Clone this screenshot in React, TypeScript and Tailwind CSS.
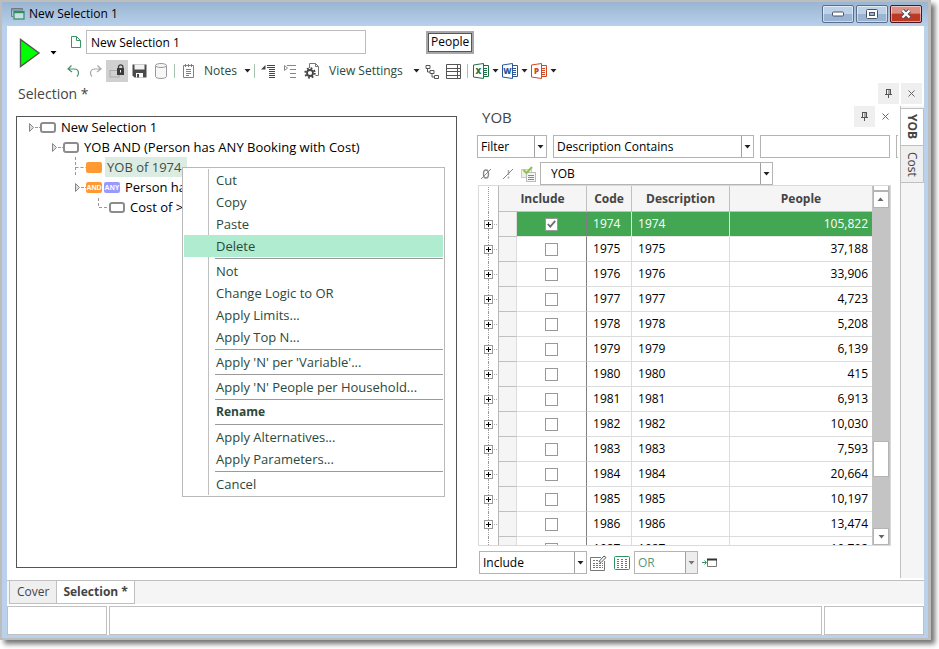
import type { ReactNode } from 'react';

const treeRows = [
  { indent: 'pl-3', link: 'arrow', badges: ['box'], text: 'New Selection 1' },
  { indent: 'pl-[35px]', link: 'arrow', badges: ['box'], text: 'YOB AND (Person has ANY Booking with Cost)' },
  { indent: 'pl-[58px]', link: 'tee', badges: ['orange'], text: 'YOB of 1974', selected: true },
  { indent: 'pl-[58px]', link: 'arrow', badges: ['AND', 'ANY'], text: 'Person has' },
  { indent: 'pl-[81px]', link: 'corner', badges: ['box'], text: 'Cost of >' },
];

const menuGroups = [
  ['Cut', 'Copy', 'Paste', 'Delete'],
  ['Not', 'Change Logic to OR', 'Apply Limits...', 'Apply Top N...'],
  ["Apply 'N' per 'Variable'..."],
  ["Apply 'N' People per Household..."],
  ['Rename'],
  ['Apply Alternatives...', 'Apply Parameters...'],
  ['Cancel'],
];

const rows = [
  { code: '1974', people: '105,822' },
  { code: '1975', people: '37,188' },
  { code: '1976', people: '33,906' },
  { code: '1977', people: '4,723' },
  { code: '1978', people: '5,208' },
  { code: '1979', people: '6,139' },
  { code: '1980', people: '415' },
  { code: '1981', people: '6,913' },
  { code: '1982', people: '10,030' },
  { code: '1983', people: '7,593' },
  { code: '1984', people: '20,664' },
  { code: '1985', people: '10,197' },
  { code: '1986', people: '13,474' },
  { code: '1987', people: '10,792' },
];

const offices = [
  { letter: 'X', name: 'Excel', color: '#1e7145' },
  { letter: 'W', name: 'Word', color: '#2b579a' },
  { letter: 'P', name: 'PowerPoint', color: '#d24726' },
];

function Caret({ color = '#222' }: { color?: string }) {
  return (
    <svg width="7" height="4" viewBox="0 0 7 4" className="shrink-0" aria-hidden="true">
      <path d="M0.5 0h6L3.5 3.5z" fill={color} />
    </svg>
  );
}

function ToolButton({ label, active, children }: { label: string; active?: boolean; children: ReactNode }) {
  return (
    <button
      aria-label={label}
      className={`flex h-[22px] w-[22px] shrink-0 items-center justify-center ${active ? 'bg-[#d0d0d0]' : ''}`}
    >
      {children}
    </button>
  );
}

function Separator() {
  return <span className="mx-[2px] h-[14px] w-px shrink-0 bg-[#a5c4b2]" />;
}

function Dropdown({ label, value, className, disabled }: { label: string; value: string; className: string; disabled?: boolean }) {
  return (
    <div className={`flex h-[23px] border border-[#b4b4b4] bg-white ${className}`}>
      <select
        aria-label={label}
        disabled={disabled}
        className={`min-w-0 flex-1 appearance-none truncate outline-none ${disabled ? 'text-[#5f9478]' : 'text-black'}`}
      >
        <option>{value}</option>
      </select>
      <span className={`flex w-3 shrink-0 items-center justify-center border-l border-[#a0a0a0] ${disabled ? 'bg-[#ededed]' : ''}`}>
        <Caret color={disabled ? '#777' : '#222'} />
      </span>
    </div>
  );
}

function PinButton() {
  return (
    <button aria-label="Pin" className="flex h-[21px] w-[21px] items-center justify-center bg-[#efefef]">
      <svg width="9" height="9" viewBox="0 0 9 9" fill="none" stroke="#555" shapeRendering="crispEdges">
        <path d="M2 0.5h5M2.5 0v5M6.5 0v5M1 5.5h7M4.5 6v3" />
        <path d="M4.5 1v4M5.5 1v4" stroke="#aaa" />
      </svg>
    </button>
  );
}

function CloseButton({ shaded }: { shaded?: boolean }) {
  return (
    <button aria-label="Close panel" className={`flex h-[21px] w-[21px] items-center justify-center ${shaded ? 'bg-[#efefef]' : ''}`}>
      <svg width="7" height="7" viewBox="0 0 7 7" fill="none" stroke="#666">
        <path d="M0.5 0.5l6 6M6.5 0.5l-6 6" />
      </svg>
    </button>
  );
}

function TitleBar() {
  const frame = 'flex h-[18px] w-8 items-center justify-center rounded-[2px] border shadow-[inset_0_0_0_1px_rgba(255,255,255,0.5)]';
  const blue = 'border-[#5a6f8c] bg-linear-to-b from-[#bdd2e8] from-50% to-[#9ab5d3] to-50%';
  return (
    <header className="flex h-6 shrink-0 items-center bg-linear-to-b from-[#9ab5d2] to-[#b8d0ea] pr-[6px] pl-[9px]">
      <svg width="14" height="12" viewBox="0 0 14 12" fill="none" aria-hidden="true">
        <path d="M2 8.5H0.5v-8h11V2" stroke="#6f7b80" />
        <path d="M0.5 2h11" stroke="#6f7b80" />
        <rect x="3" y="3.5" width="10" height="7.5" fill="#c8dde8" stroke="#2f8f5b" strokeWidth="1.2" />
        <path d="M3 4.2h10" stroke="#2f8f5b" strokeWidth="2" />
      </svg>
      <h1 className="ml-1 flex-1 text-black">New Selection 1</h1>
      <div className="flex gap-[2px]">
        <button aria-label="Minimize" className={`${frame} ${blue}`}>
          <svg width="12" height="6" viewBox="0 0 12 6">
            <rect x="0.5" y="1" width="11" height="4" rx="1" fill="#fff" stroke="#4a5468" />
          </svg>
        </button>
        <button aria-label="Maximize" className={`${frame} ${blue}`}>
          <svg width="12" height="10" viewBox="0 0 12 10">
            <rect x="0.5" y="0.5" width="11" height="9" rx="1" fill="#fff" stroke="#4a5468" />
            <rect x="3.5" y="3.5" width="5" height="3" fill="#9ab5d3" stroke="#4a5468" />
          </svg>
        </button>
        <button
          aria-label="Close"
          className={`${frame} border-[#4d1420] bg-linear-to-b from-[#dd8f84] from-45% to-[#bb3a26] to-50%`}
        >
          <svg width="12" height="10" viewBox="0 0 12 10">
            <path d="M2.5 1.5l7 7M9.5 1.5l-7 7" stroke="#4a4a5a" strokeWidth="4.2" />
            <path d="M2.5 1.5l7 7M9.5 1.5l-7 7" stroke="#fff" strokeWidth="2.4" />
          </svg>
        </button>
      </div>
    </header>
  );
}

function OfficeIcon({ letter, color }: { letter: string; color: string }) {
  return (
    <svg width="16" height="16" viewBox="0 0 16 16" fill="none" aria-hidden="true">
      <path d="M10.5 2.5h5v11h-5" stroke={color} />
      <path d="M11 5.5h3M11 7.5h3M11 9.5h3M11 11.5h3" stroke={color} />
      <path d="M0.5 2L10.5 0.5v15L0.5 14z" fill="#fff" stroke={color} />
      <text x="5.5" y="11" textAnchor="middle" fontSize="8" fontWeight="800" fill={color}>
        {letter}
      </text>
    </svg>
  );
}

function Toolbar() {
  return (
    <div className="flex shrink-0 pt-1">
      <div className="flex w-[55px] shrink-0 gap-[9px] pt-2 pl-3">
        <button aria-label="Run" className="flex h-[30px]">
          <svg width="22" height="30" viewBox="0 0 22 30">
            <path d="M1.5 1.5v27L20 15z" fill="#0f0" stroke="#4d5a4d" strokeWidth="1.4" />
          </svg>
        </button>
        <button aria-label="Run options" className="flex h-[30px] items-center">
          <Caret color="#000" />
        </button>
      </div>
      <div className="flex min-w-0 flex-1 flex-col gap-[6px]">
        <div className="flex h-6 items-center">
          <svg width="12" height="14" viewBox="0 0 12 14" fill="none" stroke="#3a9563" className="mr-1 ml-2" aria-hidden="true">
            <path d="M1.5 1.5h5l4 4v7h-9zM6.5 1.5v4h4" />
          </svg>
          <input
            aria-label="Selection name"
            defaultValue="New Selection 1"
            className="h-6 w-[280px] border border-[#bcbcbc] px-1 text-black outline-none"
          />
          <button className="ml-[60px] h-[23px] border-2 border-[#a8a8a8] text-black">
            <span className="flex h-[19px] items-center border border-[#555] px-[2px]">People</span>
          </button>
        </div>
        <div className="flex h-[22px] items-center">
          <ToolButton label="Undo">
            <svg width="13" height="12" viewBox="0 0 13 12" fill="none" stroke="#4b8f6c" strokeWidth="1.2">
              <path d="M4.5 0.5L1 4l4 3M1 4h6c3 0 4.500 2 4.500 4 0 1.500-.500 2.500-1.500 3.500" />
            </svg>
          </ToolButton>
          <ToolButton label="Redo">
            <svg width="13" height="12" viewBox="0 0 13 12" fill="none" stroke="#a3a8a6" strokeWidth="1.2">
              <path d="M8.500 0.500L12 4l-4 3M12 4H6C3 4 1.500 6 1.500 8c0 1.500.500 2.500 1.500 3.500" />
            </svg>
          </ToolButton>
          <ToolButton label="Lock" active>
            <svg width="16" height="14" viewBox="0 0 16 14" fill="none">
              <rect x="1" y="6.500" width="9" height="6.500" stroke="#aaa" />
              <path d="M9.500 4.500V3a2.200 2.200 0 0 1 4.400 0v1.500" stroke="#444" strokeWidth="1.3" />
              <rect x="8" y="4" width="7" height="7" fill="#3a3a3a" />
              <path d="M11.500 6v2.500" stroke="#eee" />
            </svg>
          </ToolButton>
          <ToolButton label="Save">
            <svg width="15" height="14" viewBox="0 0 15 14">
              <path d="M0.500 0.500h14v13h-12l-2-2z" fill="#4a4a4a" />
              <path d="M2.500 0.500h10v5h-10z" fill="#f2f2f2" />
              <path d="M4 9h7v4.500H4z" fill="#fff" />
              <path d="M5 10h2v3.500H5z" fill="#4a4a4a" />
            </svg>
          </ToolButton>
          <ToolButton label="Database">
            <svg width="12" height="16" viewBox="0 0 12 16" fill="#f7f7f7" stroke="#999">
              <path d="M0.500 2.500v11c0 2.600 11 2.600 11 0v-11" />
              <ellipse cx="6" cy="2.500" rx="5.500" ry="2" />
            </svg>
          </ToolButton>
          <Separator />
          <ToolButton label="Notes list">
            <svg width="11" height="14" viewBox="0 0 11 14" fill="none" stroke="#808080">
              <path d="M0.500 1.500h10v12h-10zM2.500 0v3M5.500 0v3M8.500 0v3M3 5.500h5M3 7.500h5M3 9.500h5M3 11.500h3" />
            </svg>
          </ToolButton>
          <button className="flex items-center gap-[7px] pr-px pl-[5px]">
            Notes
            <Caret />
          </button>
          <Separator />
          <ToolButton label="Expand">
            <svg width="16" height="14" viewBox="0 0 16 14" stroke="#444">
              <path d="M5.500 1v4.500H1z" fill="#444" stroke="none" />
              <path d="M7 1.500h8M7 3.500h8M9 5.500h6M9 7.500h6M9 9.500h6M9 11.500h6M9 13.500h6" />
            </svg>
          </ToolButton>
          <ToolButton label="Collapse">
            <svg width="14" height="14" viewBox="0 0 14 14" fill="none" stroke="#888">
              <path d="M1.500 1.500v5l3-2.500z" />
              <path d="M4 1.500h9M7 5.500h6M7 9.500h6M7 13.500h6" />
            </svg>
          </ToolButton>
          <ToolButton label="Settings">
            <svg width="16" height="16" viewBox="0 0 16 16" fill="none">
              <path d="M5.500 5V0.500h6l3 3v9h-3M11.500 0.500v3h3" stroke="#777" />
              <circle cx="6" cy="10" r="4.700" stroke="#444" strokeWidth="2" strokeDasharray="1.800 1.890" />
              <circle cx="6" cy="10" r="3" fill="#fff" stroke="#444" strokeWidth="1.800" />
            </svg>
          </ToolButton>
          <button className="flex items-center gap-[10px] pr-px pl-[6px] whitespace-nowrap">
            View Settings
            <Caret />
          </button>
          <ToolButton label="Tree view">
            <svg width="14" height="15" viewBox="0 0 14 15" fill="none" stroke="#555">
              <path d="M1 1.500h4v3H1zM5 6.500h4v3H5zM9.500 11.500h4v3h-4zM2.500 5v3H5M7 10v3h2.500" />
            </svg>
          </ToolButton>
          <ToolButton label="Grid view">
            <svg width="15" height="15" viewBox="0 0 15 15" fill="none" stroke="#555">
              <path d="M0.500 0.500h14v14H0.500zM0 4.500h15M0 7.500h15M0 11.500h15M11.500 0v15" />
            </svg>
          </ToolButton>
          <Separator />
          {offices.map((office) => (
            <button key={office.name} aria-label={`Export to ${office.name}`} className="flex shrink-0 items-center pl-[3px]">
              <span className="w-[19px]">
                <OfficeIcon letter={office.letter} color={office.color} />
              </span>
              <Caret />
            </button>
          ))}
        </div>
      </div>
    </div>
  );
}

function TreeLink({ kind }: { kind: string }) {
  return (
    <svg width="11" height="20" viewBox="0 0 11 20" fill="none" className="shrink-0" aria-hidden="true">
      {kind === 'arrow' && (
        <>
          <path d="M0.500 6.500v8l4-4z" fill="#ddd" stroke="#888" />
          <path d="M6 10.500h5" stroke="#999" strokeDasharray="3 1" />
        </>
      )}
      {kind === 'tee' && <path d="M0.500 0v20M0.500 10.500H11" stroke="#999" strokeDasharray="3 2" />}
      {kind === 'corner' && <path d="M0.500 1v9.500H11" stroke="#999" strokeDasharray="3 2" />}
    </svg>
  );
}

function Badge({ kind }: { kind: string }) {
  if (kind === 'box') {
    return <span className="h-[11px] w-4 shrink-0 rounded-[3px] border-2 border-[#8c8c8c] bg-white" />;
  }
  if (kind === 'orange') {
    return <span className="h-[11px] w-4 shrink-0 rounded-[2px] bg-[#ff9933]" />;
  }
  return (
    <span
      className={`flex h-[11px] w-4 shrink-0 items-center justify-center rounded-[2px] font-['Liberation_Sans',sans-serif] text-[7px] leading-none font-bold text-white ${kind === 'AND' ? 'bg-[#ff9933]' : 'bg-[#9999ff]'}`}
    >
      {kind}
    </span>
  );
}

function ContextMenu() {
  return (
    <div role="menu" className="absolute top-[50px] left-[165px] w-[263px] border border-[#b9b9b9] bg-white p-px text-[13px] text-[#2b4a3c]">
      {menuGroups.map((group, i) => (
        <div key={group[0]}>
          {i > 0 && (
            <div className="flex h-[3px] items-center">
              <span className="mr-[6px] h-full w-[25px] border-r border-[#c0c0c0]" />
              <span className="h-px flex-1 bg-[#9a9a9a]" />
            </div>
          )}
          {group.map((item) => (
            <button
              key={item}
              role="menuitem"
              className={`flex h-[22px] w-full items-center ${item === 'Delete' ? 'bg-[#b0edd0]' : ''} ${item === 'Rename' ? 'text-[12px] font-bold' : ''}`}
            >
              <span className={`mr-[7px] h-full w-[25px] border-r ${item === 'Delete' ? 'border-transparent' : 'border-[#c0c0c0]'}`} />
              {item}
            </button>
          ))}
        </div>
      ))}
    </div>
  );
}

function SelectionTree() {
  return (
    <section className="relative mt-[10px] mr-[13px] mb-[10px] ml-[9px] border border-[#555] bg-white text-[13px] text-black">
      <ul>
        {treeRows.map((row) => (
          <li key={row.text} className={`flex h-5 items-center whitespace-nowrap ${row.indent}`}>
            <TreeLink kind={row.link} />
            <span className="mr-[3px] flex gap-[2px]">
              {row.badges.map((kind) => (
                <Badge key={kind} kind={kind} />
              ))}
            </span>
            <span className={`flex h-5 items-center px-[2px] ${row.selected ? 'bg-[#dcece3] pr-[6px] text-[#3f4f47]' : ''}`}>
              {row.text}
            </span>
          </li>
        ))}
      </ul>
      <ContextMenu />
    </section>
  );
}

function Expander({ label }: { label: string }) {
  return (
    <button aria-label={`Expand ${label}`} className="flex">
      <svg width="14" height="9" viewBox="0 0 14 9" fill="none">
        <rect x="0.500" y="0.500" width="8" height="8" fill="#fff" stroke="#999" />
        <path d="M2 4.500h5M4.500 2v5" stroke="#000" />
        <path d="M10 4.500h4" stroke="#aaa" strokeDasharray="1 1" />
      </svg>
    </button>
  );
}

function VariableGrid() {
  const cell = 'h-[25px] border-b p-0';
  return (
    <div className="mr-[7px] ml-[8px] flex min-h-0 flex-1 overflow-hidden border border-[#dadada]">
      <div className="min-w-0 flex-1 overflow-hidden">
        <table className="w-full table-fixed border-separate border-spacing-0">
          <colgroup>
            <col className="w-[20px]" />
            <col className="w-[18px]" />
            <col className="w-[70px]" />
            <col className="w-[45px]" />
            <col className="w-[98px]" />
            <col />
          </colgroup>
          <thead>
            <tr className="bg-[#f5f5f5] text-[#444]">
              <th className="h-[26px] border-r border-[#b8b8b8] bg-white p-0" aria-label="Expand">
                <span className="ml-[9px] block h-[25px] border-l border-dotted border-[#999]" />
              </th>
              <th colSpan={2} className="border-r border-b border-[#c0c0c0] p-0">Include</th>
              <th className="border-r border-b border-[#c0c0c0] p-0">Code</th>
              <th className="border-r border-b border-[#c0c0c0] p-0">Description</th>
              <th className="border-b border-[#c0c0c0] p-0">People</th>
            </tr>
          </thead>
          <tbody>
            {rows.map((row, i) => {
              const tone = i === 0 ? 'border-[#e8e8e8] bg-[#43a653] text-white' : 'border-[#dcdcdc] text-black';
              return (
                <tr key={row.code}>
                  <td className="h-[25px] border-r border-[#b8b8b8] p-0">
                    <div className="ml-[5px] flex h-[25px] flex-col">
                      <span className="ml-1 flex-1 border-l border-dotted border-[#999]" />
                      <Expander label={row.code} />
                      <span className="ml-1 flex-1 border-l border-dotted border-[#999]" />
                    </div>
                  </td>
                  <td className={`${cell} border-r border-r-[#dcdcdc] border-b-[#c0c0c0] bg-[#f5f5f5]`} />
                  <td className={`${cell} border-r ${tone} border-r-[#808080]`}>
                    <label className="flex items-center justify-center">
                      <input type="checkbox" aria-label={`Include ${row.code}`} defaultChecked={i === 0} className="peer sr-only" />
                      <span className="flex h-[13px] w-[13px] items-center justify-center border border-[#999] bg-white text-transparent peer-checked:text-[#707070]">
                        <svg width="9" height="8" viewBox="0 0 9 8" fill="none" stroke="currentColor" strokeWidth="1.800">
                          <path d="M0.800 4l2.500 2.700L8.200 0.800" />
                        </svg>
                      </span>
                    </label>
                  </td>
                  <td className={`${cell} border-r pl-[6px] ${tone}`}>{row.code}</td>
                  <td className={`${cell} border-r pl-[6px] ${tone}`}>{row.code}</td>
                  <td className={`${cell} pr-1 text-right ${tone}`}>{row.people}</td>
                </tr>
              );
            })}
          </tbody>
        </table>
      </div>
      <div className="flex w-[18px] shrink-0 flex-col bg-[#c4c4c4] px-px">
        <span className="h-[5px] border border-t-0 border-[#b4b4b4] bg-white" />
        <button aria-label="Scroll up" className="flex h-[17px] rotate-180 items-center justify-center border border-[#b4b4b4] bg-white">
          <Caret color="#666" />
        </button>
        <span className="flex-[233]" />
        <span className="h-[36px] border border-[#b4b4b4] bg-white" />
        <span className="flex-[51]" />
        <button aria-label="Scroll down" className="flex h-[17px] items-center justify-center border border-[#b4b4b4] bg-white">
          <Caret color="#666" />
        </button>
      </div>
    </div>
  );
}

function VariablePanel() {
  return (
    <section className="flex min-h-0 flex-col pr-[2px] pb-1">
      <div className="mb-[8px] flex h-[21px] items-center pr-[2px]">
        <h2 className="flex-1 pl-3 text-[15px] text-[#444]">YOB</h2>
        <PinButton />
        <CloseButton />
      </div>
      <div className="flex gap-[6px] overflow-hidden pl-[7px]">
        <Dropdown label="Filter type" value="Filter" className="w-[70px] shrink-0 pl-[3px]" />
        <Dropdown label="Filter field" value="Description Contains" className="w-[201px] shrink-0 pl-[3px]" />
        <input aria-label="Filter text" className="h-[23px] min-w-0 flex-1 border border-[#b4b4b4] px-1 outline-none" />
        <span className="w-[2px] shrink-0 border-y border-l border-[#b4b4b4]" />
      </div>
      <div className="mt-1 flex h-[23px] items-center pl-[7px]">
        <ToolButton label="Clear zero values">
          <svg width="12" height="12" viewBox="0 0 12 12" fill="none" className="mr-1">
            <ellipse cx="6" cy="6" rx="2.500" ry="4" stroke="#888" strokeWidth="1.400" />
            <path d="M1 11L11 1" stroke="#e06060" />
          </svg>
        </ToolButton>
        <ToolButton label="Clear missing values">
          <svg width="12" height="12" viewBox="0 0 12 12" fill="none" className="mr-1">
            <path d="M6.500 2v5M6.500 8.500v2" stroke="#aaa" strokeWidth="1.500" />
            <path d="M1 11L11 1" stroke="#e06060" />
          </svg>
        </ToolButton>
        <span className="flex w-[19px] shrink-0">
          <svg width="16" height="16" viewBox="0 0 16 16" fill="none" aria-hidden="true">
            <rect x="0.500" y="3.500" width="10" height="8" fill="#eee" stroke="#ccc" />
            <rect x="5.500" y="6.500" width="9" height="9" fill="#f5f5f5" stroke="#bbb" />
            <path d="M7 9.500h6M7 11.500h6M7 13.500h6" stroke="#888" />
            <path d="M2.500 4l3 3L11 1" stroke="#8cc63f" strokeWidth="2" />
          </svg>
        </span>
        <Dropdown label="Variable" value="YOB" className="w-[233px] shrink-0 pl-[10px]" />
      </div>
      <VariableGrid />
      <div className="mt-[5px] flex h-[23px] items-center pl-[9px]">
        <Dropdown label="Include mode" value="Include" className="w-[108px] pl-[3px]" />
        <ToolButton label="Edit grid">
          <svg width="17" height="16" viewBox="0 0 17 16" fill="none" stroke="#777">
            <path d="M11 2.500H0.500v13h14V6" />
            <path d="M3 5.500h2M6 5.500h2M3 8.500h2M6 8.500h2M9 8.500h2M12 8.500h1M3 10.500h2M6 10.500h2M9 10.500h2M12 10.500h1M3 12.500h2M6 12.500h2M9 12.500h2M12 12.500h1" />
            <path d="M9 6.500L14 1l2 1.500-5 5z" stroke="#555" />
          </svg>
        </ToolButton>
        <span className="ml-[5px] flex w-5 shrink-0">
          <svg width="16" height="14" viewBox="0 0 16 14" fill="none" stroke="#2f9562" aria-hidden="true">
            <rect x="0.500" y="0.500" width="15" height="13" rx="1" />
            <path d="M3 3.500h2M7 3.500h2M11 3.500h2M3 5.500h2M7 5.500h2M11 5.500h2M3 7.500h2M7 7.500h2M11 7.500h2M3 9.500h2M7 9.500h2M11 9.500h2M3 11.500h2M7 11.500h2M11 11.500h2" />
          </svg>
        </span>
        <Dropdown label="Logic" value="OR" className="w-16 pl-[3px]" disabled />
        <ToolButton label="Send to window">
          <svg width="15" height="9" viewBox="0 0 15 9" fill="none">
            <path d="M0 4.500h4M2.500 2.500l2 2-2 2" stroke="#2f9562" />
            <path d="M5.500 1.500h9v7h-9z" stroke="#777" />
            <path d="M5 1.500h10" stroke="#333" strokeWidth="2" />
          </svg>
        </ToolButton>
      </div>
    </section>
  );
}

function SideTabs() {
  return (
    <nav className="flex flex-col border-l border-[#c0c0c0] bg-[#f5f5f5] text-[12px] text-[#444]">
      <button className="mt-[2px] flex h-[37px] items-center justify-center border-t border-r border-[#c0c0c0] bg-white font-bold [writing-mode:vertical-rl]">
        YOB
      </button>
      <button className="flex h-[38px] items-center justify-center border border-l-0 border-[#c0c0c0] bg-[#efefef] [writing-mode:vertical-rl]">
        Cost
      </button>
    </nav>
  );
}

export default function App() {
  return (
    <div className="h-screen bg-white pr-2 pb-[9px] font-['Open_Sans','Noto_Sans',sans-serif] text-[12px] leading-4 text-[#2b4a3c]">
      <div className="flex h-full flex-col border-2 border-r-[3px] border-[#bdbdbd] bg-[#b9d1ea] pb-[3px] shadow-[4px_4px_5px_rgba(0,0,0,0.55)]">
        <TitleBar />
        <main className="mr-1 ml-[5px] flex min-h-0 flex-1 flex-col bg-white">
          <Toolbar />
          <div className="mt-px flex h-[21px] shrink-0 items-center gap-[2px] pr-[2px] pl-[11px]">
            <h2 className="flex-1 text-[14px] text-[#444]">Selection *</h2>
            <PinButton />
            <CloseButton shaded />
          </div>
          <div className="mt-[2px] grid min-h-0 flex-1 grid-cols-[minmax(0,463fr)_minmax(0,430fr)_24px] grid-rows-[minmax(0,1fr)]">
            <SelectionTree />
            <VariablePanel />
            <SideTabs />
          </div>
          <nav className="mt-[2px] flex h-6 shrink-0 border-t border-[#c0c0c0] bg-[#f5f5f5] pl-[2px] text-[12px] text-[#444]">
            <button className="border-x border-b border-[#c0c0c0] bg-[#efefef] px-[7px]">Cover</button>
            <button className="border-r border-b border-[#c0c0c0] bg-white px-[6px] font-bold">Selection *</button>
          </nav>
          <footer className="mt-[2px] flex h-[29px] shrink-0 gap-[2px]">
            <div className="w-[100px] border border-[#c0c0c0]" />
            <div className="flex-1 border border-[#c0c0c0]" />
            <div className="w-[100px] border border-[#c0c0c0]" />
          </footer>
        </main>
      </div>
    </div>
  );
}
